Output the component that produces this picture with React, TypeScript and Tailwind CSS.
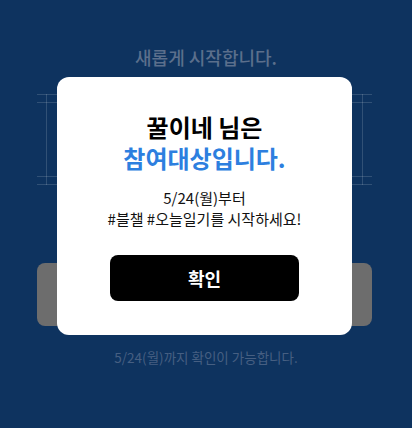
import React from 'react';

const font = { fontFamily: '"Noto Sans CJK KR", "Noto Sans", sans-serif' };

const Frame = () => (
  <div className="grid w-[335px] h-[91px] ml-[37px] mt-[24px]">
    <div className="[grid-area:1/1] border-y border-white/15" />
    <div className="[grid-area:1/1] my-[8px] border-y border-white/15" />
    <div className="[grid-area:1/1] mx-[9px] border-x border-white/15" />
  </div>
);

export default function App() {
  return (
    <div className="relative h-[428px] w-full overflow-hidden bg-[#0e335f]" style={font}>
      {/* page behind the dialog, already dimmed */}
      <div className="flex flex-col pt-[44px]">
        <p className="text-center text-[18px] leading-[26px] font-medium text-[#5b6f8c]">새롭게 시작합니다.</p>
        <Frame />
        <div className="ml-[37px] mt-[78px] h-[63px] w-[335px] rounded-lg bg-[#6d6d6d]" />
        <p className="mt-[22px] text-center text-[13.5px] leading-[18px] text-[#465f82]">5/24(월)까지 확인이 가능합니다.</p>
      </div>

      {/* dialog */}
      <div className="absolute inset-0 pt-[77px]">
        <div className="ml-[57px] w-[295px] rounded-xl bg-white pt-[34px] pb-[34px] flex flex-col items-center">
          <h2 className="text-center text-[24px] leading-[31px] font-bold text-black">
            꿀이네 님은
            <br />
            <span className="text-[#2d7fdf]">참여대상입니다.</span>
          </h2>
          <p className="mt-[14px] text-center text-[15px] leading-[21px] text-[#111]">
            5/24(월)부터
            <br />
            #블챌 #오늘일기를 시작하세요!
          </p>
          <button className="mt-[26px] h-[46px] w-[189px] rounded-lg bg-black text-[18px] font-bold text-white">확인</button>
        </div>
      </div>
    </div>
  );
}
